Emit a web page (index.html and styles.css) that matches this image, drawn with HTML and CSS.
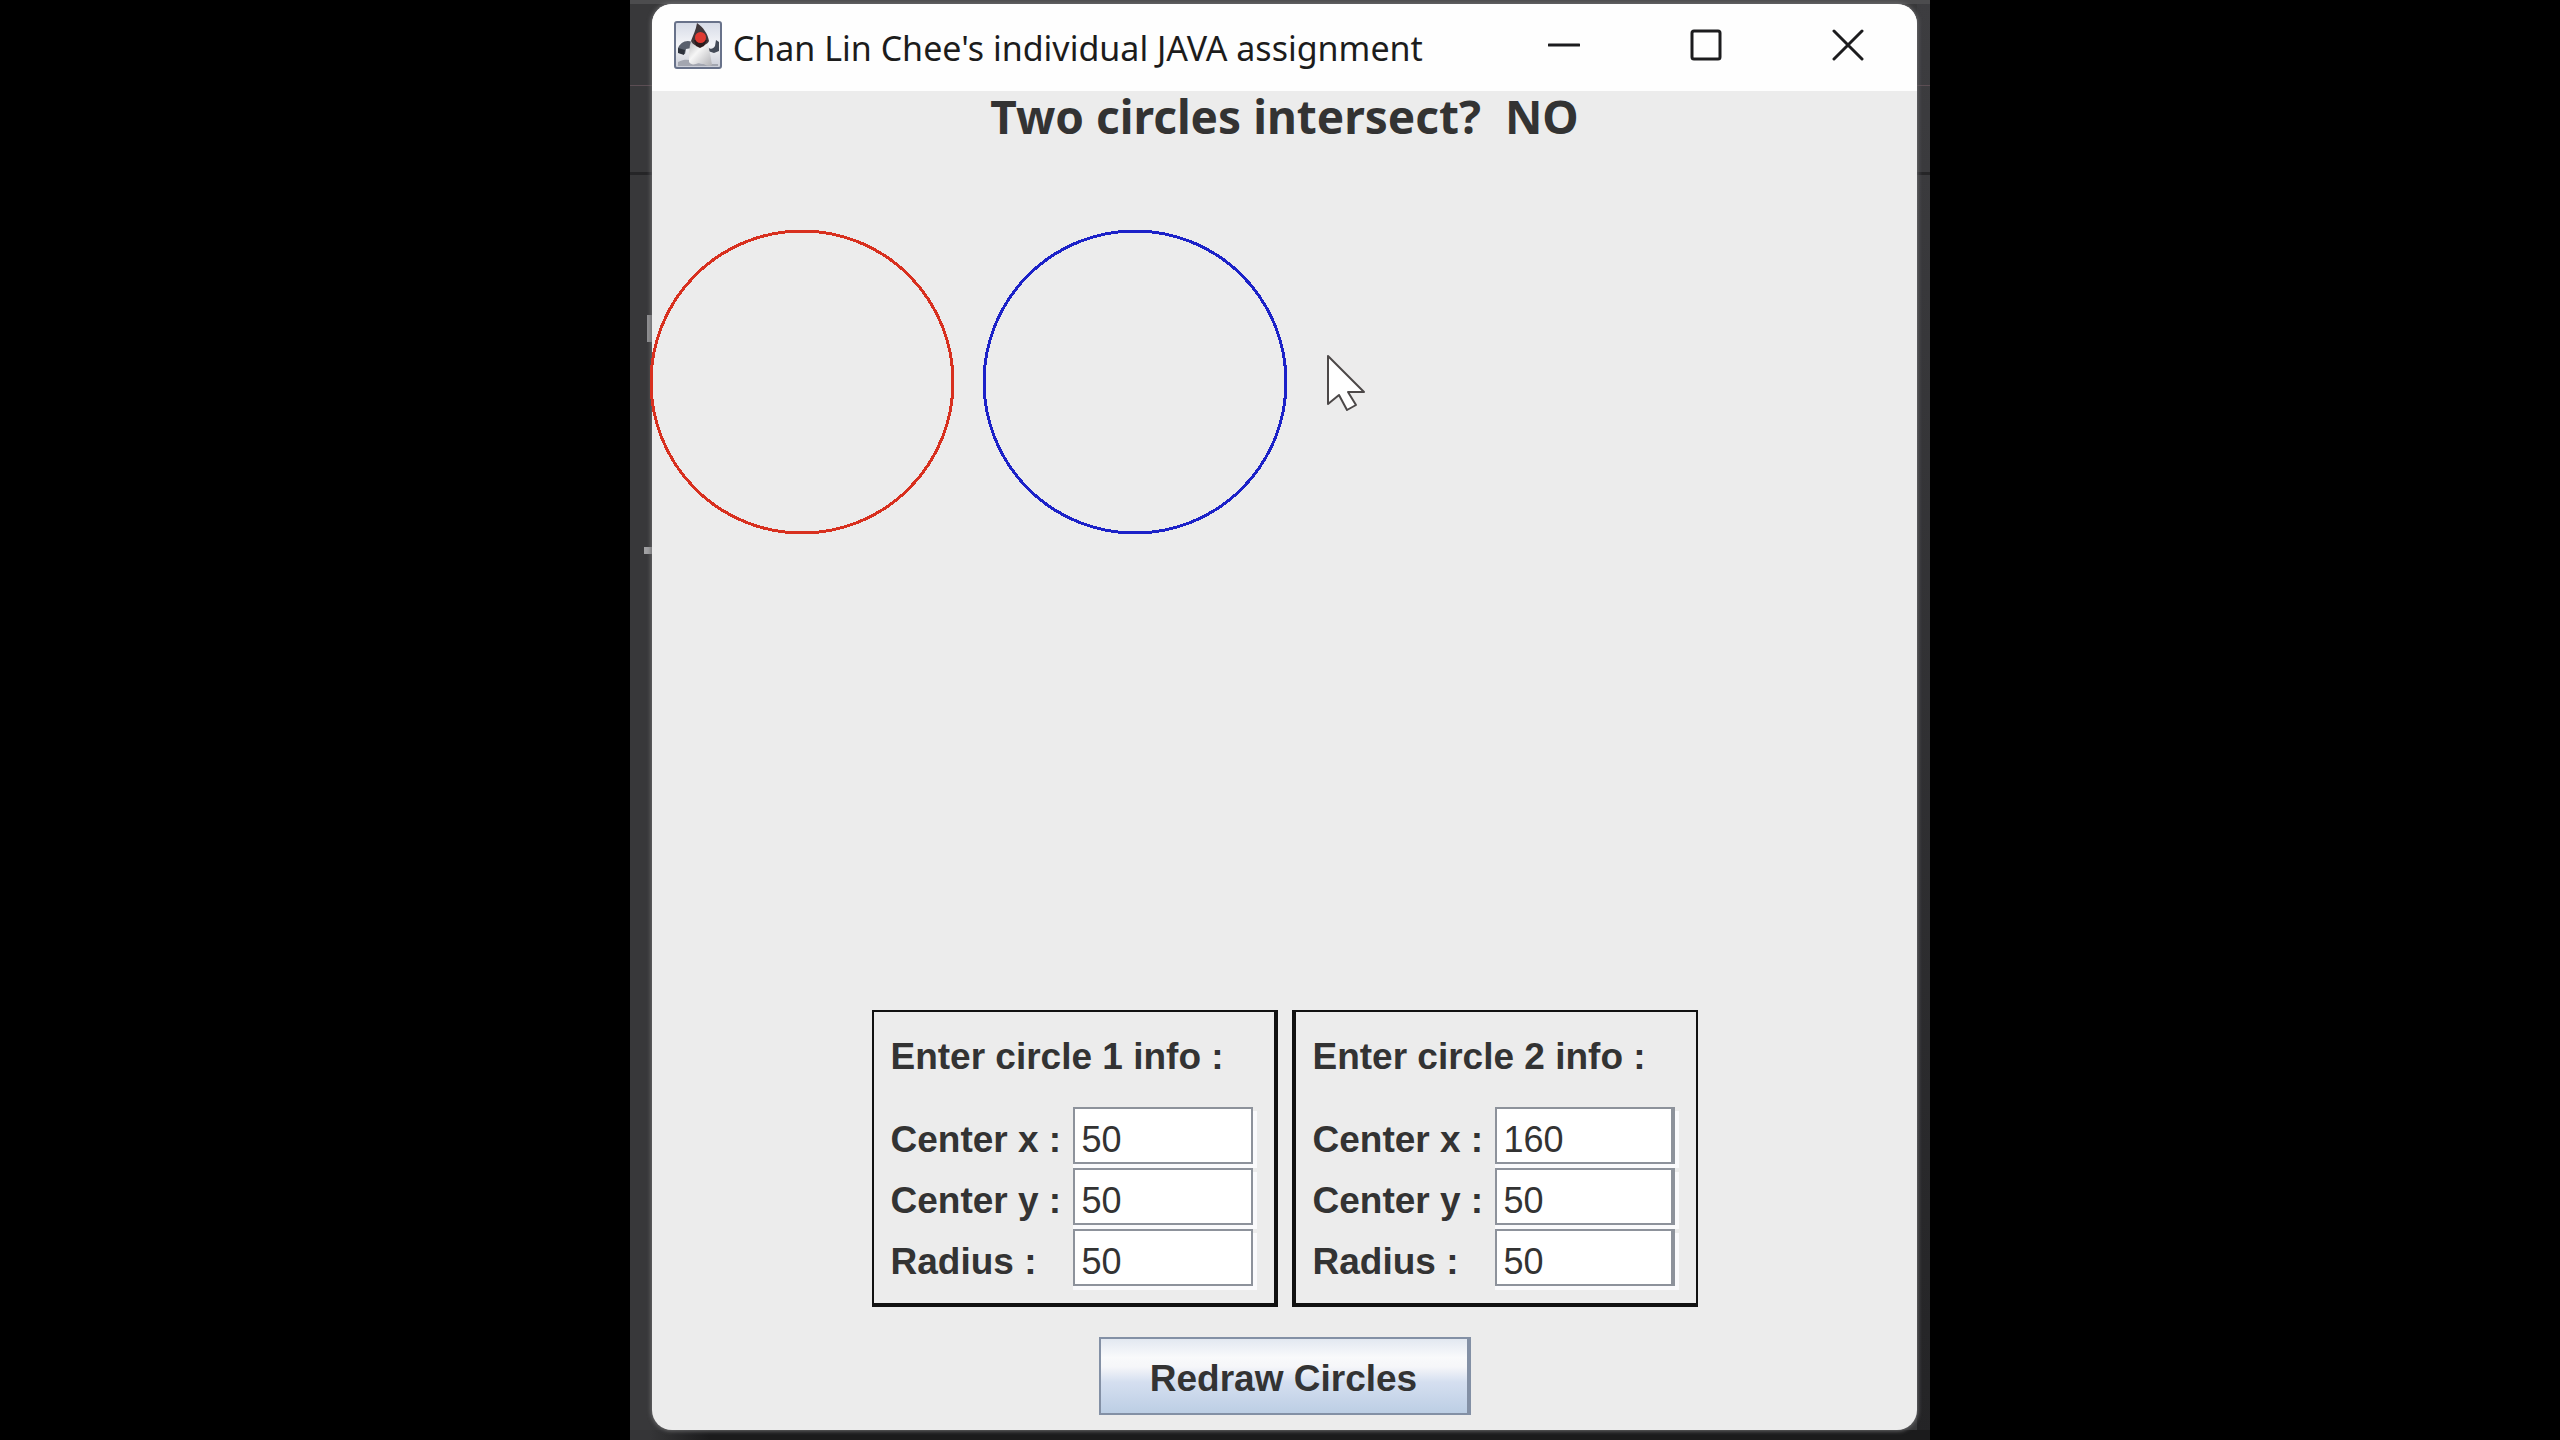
FILE: index.html
```html
<!DOCTYPE html>
<html lang="en">
<head>
<meta charset="utf-8">
<title>Chan Lin Chee's individual JAVA assignment</title>
<link rel="stylesheet" href="styles.css">
</head>
<body>
<div class="desktop">
  <main class="window">
    <header class="titlebar">
      <svg class="app-icon" viewBox="0 0 48 48" aria-hidden="true">
        <defs>
          <linearGradient id="tile" x1="0" y1="0" x2="0" y2="1">
            <stop offset="0" stop-color="#d5dae6"/><stop offset=".5" stop-color="#f4f5f8"/><stop offset="1" stop-color="#c9ccd6"/>
          </linearGradient>
          <linearGradient id="belly" x1="0" y1="0" x2="1" y2="1">
            <stop offset="0" stop-color="#b9b9bc"/><stop offset=".4" stop-color="#f6f6f6"/><stop offset="1" stop-color="#b0b0b4"/>
          </linearGradient>
        </defs>
        <rect x="1" y="1" width="46" height="46" rx="2" fill="url(#tile)" stroke="#68728a" stroke-width="2"/>
        <path d="M4 41c8-4 13-2 17 0 6 3 14 2 23 2v2H4z" fill="#a3a6b0"/>
        <path d="M18 21c-6-3-12 1-14 6l2 5 5 1 1-5 6-1z" fill="#59606d"/>
        <path d="M4 27l7 2-1 5-6-2z" fill="#2c313b"/>
        <path d="M33 26c4 3 6 2 8-1l1-6 3 2v9l-5 2-6-2z" fill="#444b58"/>
        <path d="M17 20h16c2 6 4 17 5 24-5 3-8-3-13-2-4 1-7 3-10-1 0-7 0-15 2-21z" fill="url(#belly)"/>
        <path d="M23 2c6 4 11 11 12 18-3 6-14 8-18 0 2-6 5-11 6-18z" fill="#40373a"/>
        <path d="M20 19h13l-3 6-4 2-4-2z" fill="#2d1c1c"/>
        <circle cx="26.500" cy="16.500" r="5.500" fill="#df3a31"/>
      </svg>
      <h1 class="title">Chan Lin Chee's individual JAVA assignment</h1>
      <div class="controls">
        <button class="control" type="button" aria-label="Minimize"><svg viewBox="0 0 32 32"><path d="M1 16h30"/></svg></button>
        <button class="control" type="button" aria-label="Maximize"><svg viewBox="0 0 32 32"><rect x="2" y="2" width="28" height="28" rx="2"/></svg></button>
        <button class="control" type="button" aria-label="Close"><svg viewBox="0 0 32 32"><path d="M2 2l28 28M30 2L2 30"/></svg></button>
      </div>
    </header>
    <h2 class="result">Two circles intersect?&nbsp; NO</h2>
    <section class="canvas" aria-label="Circles">
      <svg class="drawing">
        <circle class="circle-one" cx="150" cy="231" r="151"/>
        <circle class="circle-two" cx="483" cy="231" r="151"/>
      </svg>
      <svg class="pointer" viewBox="0 0 40 58" aria-hidden="true"><path d="M2 2v48l11-9 8 15 9-5-8-13h16z"/></svg>
    </section>
    <form class="entry">
      <div class="panels">
        <fieldset class="panel panel-one">
          <h3 class="panel-title">Enter circle 1 info :</h3>
          <div class="fields">
            <label for="x1">Center x :</label><input id="x1" type="text" value="50">
            <label for="y1">Center y :</label><input id="y1" type="text" value="50">
            <label for="r1">Radius :</label><input id="r1" type="text" value="50">
          </div>
        </fieldset>
        <fieldset class="panel panel-two">
          <h3 class="panel-title">Enter circle 2 info :</h3>
          <div class="fields">
            <label for="x2">Center x :</label><input id="x2" type="text" value="160">
            <label for="y2">Center y :</label><input id="y2" type="text" value="50">
            <label for="r2">Radius :</label><input id="r2" type="text" value="50">
          </div>
        </fieldset>
      </div>
      <button class="redraw" type="button">Redraw Circles</button>
    </form>
  </main>
</div>
</body>
</html>
```
FILE: styles.css
```css
* {
  box-sizing: border-box;
}

body {
  margin: 0;
  background: #000;
  color: #333;
  font-family: "Liberation Sans", Arial, sans-serif;
}

.desktop {
  display: flex;
  width: 50.8%;
  min-height: 100vh;
  margin: 0 auto;
  padding: 4px 13px 10px 22px;
  background:
    linear-gradient(#5c4e54, #5c4e54) 0 85px / 100% 1px no-repeat,
    linear-gradient(#252527, #252527) 0 172px / 100% 3px no-repeat,
    linear-gradient(#909092, #909092) 17px 315px / 6px 27px no-repeat,
    linear-gradient(#a0a0a2, #a0a0a2) 14px 547px / 9px 7px no-repeat,
    linear-gradient(#4c4c4e, #4c4c4e) 0 0 / 100% 4px no-repeat,
    linear-gradient(90deg, #353537 20px, #1b1b1c 80px, #1b1b1c) 0 100% / 100% 10px no-repeat,
    linear-gradient(#3d3d40, #242426) 100% 0 / 13px 100% no-repeat,
    #38383a;
}

.window {
  display: flex;
  flex: 1;
  flex-direction: column;
  min-width: 0;
  border-radius: 20px;
  background: #ececec;
  box-shadow: 0 0 4px 1px #6c6c6e;
}

.titlebar {
  display: flex;
  align-items: center;
  height: 87px;
  padding-left: 22px;
  border-radius: 20px 20px 0 0;
  background: #fefefe;
}

.app-icon {
  flex: none;
  width: 48px;
  height: 48px;
  margin-bottom: 6px;
}

.title {
  flex: 1;
  margin: 0 0 0 11px;
  color: #1c1c1c;
  font: 400 34px/56px "Noto Sans", "Open Sans", sans-serif;
  white-space: nowrap;
}

.controls {
  display: flex;
  align-self: stretch;
}

.control {
  display: grid;
  place-items: center;
  width: 142px;
  padding: 0 0 5px 3px;
  border: 0;
  background: none;
}

.control svg {
  width: 32px;
  height: 32px;
  fill: none;
  stroke: #1c1c1e;
  stroke-width: 3;
  stroke-linecap: round;
}

.result {
  margin: 0 0 10px;
  font: 700 46px/50px "Noto Sans", "Open Sans", sans-serif;
  text-align: center;
}

.canvas {
  position: relative;
  display: flex;
  flex: 1;
  min-height: 400px;
}

.drawing {
  flex: 1;
  overflow: visible;
  fill: none;
  stroke-width: 3;
  shape-rendering: crispEdges;
}

.circle-one {
  stroke: #d8301f;
}

.circle-two {
  stroke: #1c22c8;
}

.pointer {
  position: absolute;
  top: 203px;
  left: 674px;
  width: 40px;
  height: 58px;
  fill: #fff;
  stroke: #4c4848;
  stroke-width: 2;
  stroke-linejoin: round;
}

.entry {
  display: flex;
  flex-direction: column;
  align-items: center;
  gap: 30px;
  padding-bottom: 15px;
}

.panels {
  display: flex;
  gap: 14px;
}

.panel {
  min-width: 0;
  margin: 0;
  padding: 24px 21px 17px 17px;
  border: 2px solid #111;
  border-bottom-width: 4px;
}

.panel-one {
  border-right-width: 4px;
}

.panel-two {
  border-left-width: 4px;
}

.panel-title {
  margin: 0 0 29px;
  font-size: 37px;
  font-weight: 700;
  line-height: 42px;
}

.fields {
  display: grid;
  grid-template-columns: 182px 180px;
  row-gap: 4px;
}

.fields label {
  padding-top: 9px;
  font-size: 37px;
  font-weight: 700;
  line-height: 48px;
}

.fields input {
  width: 100%;
  height: 57px;
  padding: 9px 0 0 7px;
  border: 2px solid #8d929b;
  border-radius: 0;
  background: #fff;
  box-shadow: 4px 4px #fafafc, 0 4px #fafafc;
  color: #333;
  font: 36px "Liberation Sans", Arial, sans-serif;
}

.panel-two input {
  border-right-width: 4px;
}

.redraw {
  width: 372px;
  height: 78px;
  padding: 5px 0 0;
  border: 2px solid #8390a5;
  border-right-width: 4px;
  background: linear-gradient(#e2e8f1, #f9fafb 25%, #f5f6f9 38%, #d5dff0 58%, #bccee4);
  color: #333;
  font: 700 37px/42px "Liberation Sans", Arial, sans-serif;
}
```
